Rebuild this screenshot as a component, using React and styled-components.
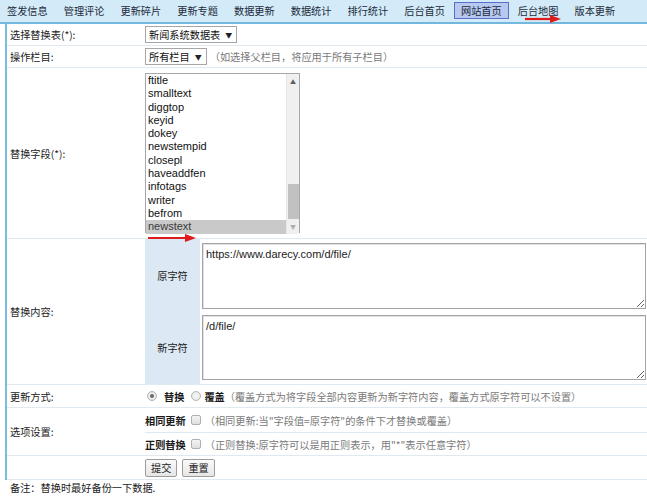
import styled, { createGlobalStyle } from "styled-components";

const GlobalStyle = createGlobalStyle`
  html, body {
    margin: 0;
    padding: 0;
    background: #ffffff;
  }
  body {
    font-family: "Noto Sans CJK SC", "Noto Sans", sans-serif;
    font-size: 10.2px;
    color: #222222;
  }
`;

const Page = styled.div`
  position: relative;
  width: 647px;
  height: 500px;
  overflow: hidden;
`;

const NavBar = styled.div`
  display: flex;
  gap: 2px;
  height: 24px;
  box-sizing: border-box;
  padding-top: 2px;
  background: #d3eaf8;
  border-bottom: 2px solid #72b7de;
`;

const NavItem = styled.div`
  height: 17px;
  line-height: 15px;
  box-sizing: border-box;
  padding: 0 6px;
  white-space: nowrap;
  color: #1d2a3a;
  border: 1px solid ${(p) => (p.$active ? "#5a6fc6" : "transparent")};
  background: ${(p) => (p.$active ? "#b7c9f0" : "transparent")};
`;

const Form = styled.div`
  margin-left: 5px;
  border-left: 2px solid #7bbde2;
`;

const Row = styled.div`
  display: grid;
  grid-template-columns: 138px 1fr;
  height: ${(p) => p.$h}px;
  border-bottom: 1px solid #dfe9ef;
`;

const Label = styled.div`
  display: flex;
  align-items: center;
  padding-left: 3px;
  white-space: nowrap;
`;

const Value = styled.div`
  display: flex;
  align-items: ${(p) => p.$align || "center"};
  gap: ${(p) => p.$gap || 0}px;
  white-space: nowrap;
  min-width: 0;
`;

const SelectBox = styled.span`
  display: inline-flex;
  align-items: center;
  gap: 5px;
  height: 17px;
  box-sizing: border-box;
  padding: 0 4px 0 3px;
  border: 1px solid #a6a6a6;
  background: #ffffff;
  color: #111;
`;

const Caret = styled.span`
  font-size: 7px;
  color: #222;
`;

const Hint = styled.span`
  color: #7a7a7a;
  margin-left: ${(p) => p.$ml || 0}px;
`;

const ListBox = styled.div`
  margin-top: 5px;
  width: 155px;
  height: 160px;
  box-sizing: border-box;
  border: 1px solid #a8a8a8;
  display: grid;
  grid-template-columns: 1fr 13px;
  background: #fff;
`;

const Options = styled.div`
  display: flex;
  flex-direction: column;
  font-family: "Liberation Sans", Arial, sans-serif;
  font-size: 11px;
`;

const Option = styled.div`
  height: 13.3px;
  line-height: 13.3px;
  padding-left: 2px;
  color: ${(p) => (p.$selected ? "#3a3a3a" : "#111")};
  background: ${(p) => (p.$selected ? "#c9c9c9" : "transparent")};
`;

const ScrollTrack = styled.div`
  display: flex;
  flex-direction: column;
  align-items: center;
  background: #f0f0f0;
  border-left: 1px solid #e6e6e6;
`;

const ScrollArrow = styled.div`
  height: 14px;
  display: flex;
  align-items: center;
  justify-content: center;
  font-size: 6px;
  color: ${(p) => (p.$dim ? "#b0b0b0" : "#606060")};
`;

const ScrollSpace = styled.div`
  flex: 1;
  width: 100%;
  display: flex;
  flex-direction: column;
  justify-content: flex-end;
  align-items: center;
`;

const Thumb = styled.div`
  width: 11px;
  height: 35px;
  background: #c1c1c1;
  margin-bottom: 1px;
`;

const SubGrid = styled.div`
  display: grid;
  grid-template-columns: 55px 1fr;
  grid-template-rows: 1fr 1fr;
  height: 100%;
`;

const SubLabel = styled.div`
  background: #dce8f3;
  display: flex;
  align-items: center;
  justify-content: center;
`;

const TextCell = styled.div`
  padding: ${(p) => p.$pad};
  display: flex;
`;

const TextArea = styled.textarea`
  flex: 1;
  margin: 0;
  box-sizing: border-box;
  border: 1px solid #a3a3a3;
  box-shadow: inset 1px 1px 0 #e2e2e2;
  padding: 4px 3px;
  font-family: "Liberation Sans", Arial, sans-serif;
  font-size: 11px;
  color: #222;
  resize: both;
  outline: none;
`;

const Radio = styled.span`
  display: inline-flex;
  align-items: center;
  justify-content: center;
  width: 10px;
  height: 10px;
  box-sizing: border-box;
  border-radius: 50%;
  border: 1px solid #b4b4b4;
  background: radial-gradient(circle, #f7f7f7 0%, #e4e4e4 100%);
  margin-left: ${(p) => p.$ml || 0}px;
  &::after {
    content: "";
    width: 4px;
    height: 4px;
    border-radius: 50%;
    background: ${(p) => (p.$checked ? "#6a6a6a" : "transparent")};
  }
`;

const Strong = styled.span`
  font-weight: bold;
  color: #1a1a1a;
  margin-left: ${(p) => p.$ml || 0}px;
`;

const Check = styled.span`
  display: inline-block;
  width: 10px;
  height: 10px;
  box-sizing: border-box;
  border: 1px solid #b0b0b0;
  border-radius: 2px;
  background: linear-gradient(#f4f4f4, #dedede);
  margin: 0 4px 0 5px;
`;

const OptionStack = styled.div`
  display: flex;
  flex-direction: column;
`;

const OptionLine = styled.div`
  display: flex;
  align-items: center;
  height: ${(p) => p.$h}px;
  border-bottom: ${(p) => (p.$line ? "1px solid #dfe9ef" : "none")};
  white-space: nowrap;
`;

const Button = styled.button`
  height: 18px;
  padding: 0 5px;
  margin: 0;
  font-family: inherit;
  font-size: 10.2px;
  color: #222;
  border: 1px solid #9c9c9c;
  border-radius: 2px;
  background: linear-gradient(#fafafa, #e6e6e6);
`;

const Note = styled.div`
  padding: 0 0 0 10px;
  line-height: 16px;
`;

const Arrow = styled.svg`
  position: absolute;
  left: ${(p) => p.$x}px;
  top: ${(p) => p.$y}px;
`;

const navItems = [
  "签发信息",
  "管理评论",
  "更新碎片",
  "更新专题",
  "数据更新",
  "数据统计",
  "排行统计",
  "后台首页",
  "网站首页",
  "后台地图",
  "版本更新",
];

const fields = [
  "ftitle",
  "smalltext",
  "diggtop",
  "keyid",
  "dokey",
  "newstempid",
  "closepl",
  "haveaddfen",
  "infotags",
  "writer",
  "befrom",
  "newstext",
];

const RedArrow = ({ x, y, w }) => (
  <Arrow $x={x} $y={y} width={w} height={10} viewBox={`0 0 ${w} 10`}>
    <line x1="0" y1="5" x2={w - 9} y2="5" stroke="#e01b1b" strokeWidth="2.2" />
    <polygon points={`${w - 11},1 ${w},5 ${w - 11},9`} fill="#e01b1b" />
  </Arrow>
);

export default function App() {
  return (
    <Page>
      <GlobalStyle />
      <NavBar>
        {navItems.map((n) => (
          <NavItem key={n} $active={n === "网站首页"}>
            {n}
          </NavItem>
        ))}
      </NavBar>

      <Form>
        <Row $h={21}>
          <Label>选择替换表(*):</Label>
          <Value>
            <SelectBox>
              新闻系统数据表<Caret>▼</Caret>
            </SelectBox>
          </Value>
        </Row>
        <Row $h={21}>
          <Label>操作栏目:</Label>
          <Value>
            <SelectBox>
              所有栏目<Caret>▼</Caret>
            </SelectBox>
            <Hint $ml={3}>（如选择父栏目，将应用于所有子栏目）</Hint>
          </Value>
        </Row>
        <Row $h={170}>
          <Label>替换字段(*):</Label>
          <Value $align="flex-start">
            <ListBox>
              <Options>
                {fields.map((f) => (
                  <Option key={f} $selected={f === "newstext"}>
                    {f}
                  </Option>
                ))}
              </Options>
              <ScrollTrack>
                <ScrollArrow>▲</ScrollArrow>
                <ScrollSpace>
                  <Thumb />
                </ScrollSpace>
                <ScrollArrow $dim>▼</ScrollArrow>
              </ScrollTrack>
            </ListBox>
          </Value>
        </Row>
        <Row $h={145}>
          <Label>替换内容:</Label>
          <SubGrid>
            <SubLabel>原字符</SubLabel>
            <TextCell $pad="4px 1px 3px 2px">
              <TextArea defaultValue="https://www.darecy.com/d/file/" />
            </TextCell>
            <SubLabel>新字符</SubLabel>
            <TextCell $pad="3px 1px 4px 2px">
              <TextArea defaultValue="/d/file/" />
            </TextCell>
          </SubGrid>
        </Row>
        <Row $h={22}>
          <Label>更新方式:</Label>
          <Value>
            <Radio $ml={2} $checked />
            <Strong $ml={7}>替换</Strong>
            <Radio $ml={7} />
            <Strong $ml={3}>覆盖</Strong>
            <Hint>（覆盖方式为将字段全部内容更新为新字符内容，覆盖方式原字符可以不设置）</Hint>
          </Value>
        </Row>
        <Row $h={47}>
          <Label>选项设置:</Label>
          <OptionStack>
            <OptionLine $h={24} $line>
              <Strong>相同更新</Strong>
              <Check />
              <Hint>（相同更新:当"字段值=原字符"的条件下才替换或覆盖）</Hint>
            </OptionLine>
            <OptionLine $h={22}>
              <Strong>正则替换</Strong>
              <Check />
              <Hint>（正则替换:原字符可以是用正则表示，用"*"表示任意字符）</Hint>
            </OptionLine>
          </OptionStack>
        </Row>
        <Row $h={23}>
          <Label />
          <Value $gap={5}>
            <Button>提交</Button>
            <Button>重置</Button>
          </Value>
        </Row>
      </Form>
      <Note>备注：替换时最好备份一下数据.</Note>

      <RedArrow x={525} y={14} w={36} />
      <RedArrow x={148} y={233} w={48} />
    </Page>
  );
}
